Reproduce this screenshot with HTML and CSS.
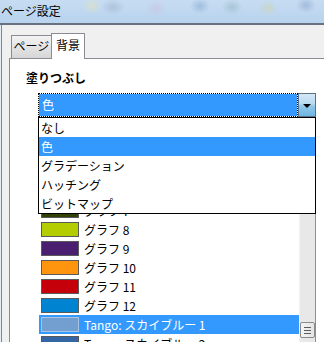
FILE: index.html
```html
<!DOCTYPE html>
<html>

<head>
    <title>ページ設定</title>
    <link rel="stylesheet" href="styles.css">
</head>

<body>
    <div class="titlebar">ページ設定</div>
    <div class="dialog">
        <div class="tabs">
            <div class="tab">ページ</div>
            <div class="tab tab-active">背景</div>
        </div>
        <div class="panel">
            <div class="heading">塗りつぶし</div>
            <div class="combo">
                <div class="combo-field">色</div>
                <div class="combo-button"><span class="arrow"></span></div>
            </div>

            <div class="listbox">
                <div class="list-items">
                    <!-- rows above グラフ 7 sit under the open dropdown -->
                    <div class="row"><span class="swatch" style="background:#314004"></span>グラフ 7</div>
                    <div class="row"><span class="swatch" style="background:#b4cd00"></span>グラフ 8</div>
                    <div class="row"><span class="swatch" style="background:#4b1f6f"></span>グラフ 9</div>
                    <div class="row"><span class="swatch" style="background:#ff950e"></span>グラフ 10</div>
                    <div class="row"><span class="swatch" style="background:#c5000b"></span>グラフ 11</div>
                    <div class="row"><span class="swatch" style="background:#0084d1"></span>グラフ 12</div>
                    <div class="row row-selected"><span class="swatch" style="background:#729fcf"></span>Tango: スカイブルー 1</div>
                    <div class="row"><span class="swatch" style="background:#3465a4"></span>Tango: スカイブルー 2</div>
                </div>
                <div class="scrollbar">
                    <div class="thumb">
                        <span class="grip"></span>
                        <span class="grip"></span>
                        <span class="grip"></span>
                    </div>
                </div>
            </div>

            <!-- open dropdown of the combo box -->
            <div class="popup">
                <div class="option">なし</div>
                <div class="option option-selected">色</div>
                <div class="option">グラデーション</div>
                <div class="option">ハッチング</div>
                <div class="option">ビットマップ</div>
            </div>
        </div>
    </div>
</body>

</html>
```

FILE: styles.css
```css
* {
    margin: 0px;
    box-sizing: border-box;
}

body {
    width: 324px;
    height: 342px;
    overflow: hidden;
    font-family: "Noto Sans CJK JP", sans-serif;
    font-size: 12px;
    color: #000;
    background-color: #fff;
}

.titlebar {
    height: 25px;
    padding-left: 1px;
    line-height: 21px;
    border-bottom: 2px solid #66727f;
    background-color: #c2d9f1;
    background-image:
        radial-gradient(ellipse 10px 8px at 92px 6px, rgba(225, 228, 185, 0.6), transparent),
        radial-gradient(ellipse 12px 8px at 113px 7px, rgba(150, 170, 195, 0.45), transparent),
        radial-gradient(ellipse 10px 9px at 156px 8px, rgba(205, 190, 220, 0.5), transparent),
        radial-gradient(ellipse 10px 8px at 200px 6px, rgba(120, 155, 200, 0.45), transparent),
        radial-gradient(ellipse 10px 8px at 232px 7px, rgba(135, 175, 180, 0.45), transparent),
        radial-gradient(ellipse 9px 8px at 268px 8px, rgba(205, 212, 170, 0.55), transparent),
        radial-gradient(ellipse 10px 8px at 306px 5px, rgba(125, 150, 195, 0.45), transparent),
        linear-gradient(#c6dcf2, #b9d3ee);
}

.dialog {
    height: 317px;
    background-color: #f0f0f0;
    box-shadow: inset 1px 0 #e6edf4, inset 2px 0 #7d8894;
}

.tabs {
    display: flex;
    align-items: flex-end;
    height: 33px;
    padding-left: 11px;
}

.tab {
    width: 40px;
    height: 23px;
    border-left: 1px solid #898c95;
    border-top: 1px solid #898c95;
    background: linear-gradient(#f3f3f3, #e4e4e4 50%, #d6d6d6);
    text-align: center;
    line-height: 20px;
}

.tab-active {
    position: relative;
    z-index: 1;
    width: 34px;
    height: 26px;
    margin-bottom: -1px;
    border-right: 1px solid #898c95;
    background: #fff;
    line-height: 22px;
}

.panel {
    position: relative;
    height: 284px;
    margin-left: 9px;
    border-top: 1px solid #898c95;
    border-left: 1px solid #898c95;
    background-color: #fff;
}

.heading {
    padding: 11px 0 0 16px;
    font-weight: bold;
    line-height: 16px;
}

.combo {
    display: flex;
    width: 278px;
    height: 24px;
    margin: 7px 0 0 28px;
    background-color: #fff;
}

.combo-field {
    flex: 1;
    border: 1px dotted #000;
    background-color: #3399ff;
    background-clip: padding-box;
    color: #fff;
    padding-left: 3px;
    line-height: 21px;
}

.combo-button {
    display: flex;
    align-items: center;
    justify-content: center;
    width: 18px;
    border: 1px solid #5f7284;
    background: linear-gradient(#d3e8f6, #b8daf1 45%, #8ec8ea 55%, #6fb6e2);
}

.arrow {
    width: 0;
    height: 0;
    border-left: 4px solid transparent;
    border-right: 4px solid transparent;
    border-top: 4px solid #000;
    margin-top: 1px;
}

.listbox {
    display: flex;
    width: 278px;
    height: 230px;
    margin: 7px 0 0 28px;
    border-left: 1px solid transparent;
    border-top: 1px solid transparent;
    border-right: 1px solid #8a8f97;
}

.list-items {
    flex: 1;
    padding-top: 76px;
}

.row {
    display: flex;
    align-items: center;
    height: 19px;
    white-space: nowrap;
}

.swatch {
    width: 38px;
    height: 15px;
    margin: 0 5px 0 2px;
    border: 1px solid #5a5a5a;
}

.row-selected {
    background-color: #3399ff;
    color: #fff;
}

.row-selected .swatch {
    border-color: #a9c4e4;
}

.scrollbar {
    width: 16px;
    background-color: #e8e8e8;
    border-left: 1px solid #f2f2f2;
}

.thumb {
    display: flex;
    flex-direction: column;
    align-items: center;
    justify-content: center;
    gap: 2px;
    width: 15px;
    height: 16px;
    margin-top: 197px;
    border: 1px solid #8b8b8b;
    border-radius: 2px;
    background: linear-gradient(90deg, #f4f4f4, #e4e4e4);
}

.grip {
    width: 7px;
    height: 1px;
    background-color: #5c5c5c;
}

.popup {
    position: absolute;
    top: 58px;
    left: 28px;
    width: 278px;
    border: 1px solid #000;
    background-color: #fff;
}

.option {
    height: 19px;
    padding-left: 2px;
    line-height: 19px;
}

.option-selected {
    background-color: #3399ff;
    color: #fff;
}
```
